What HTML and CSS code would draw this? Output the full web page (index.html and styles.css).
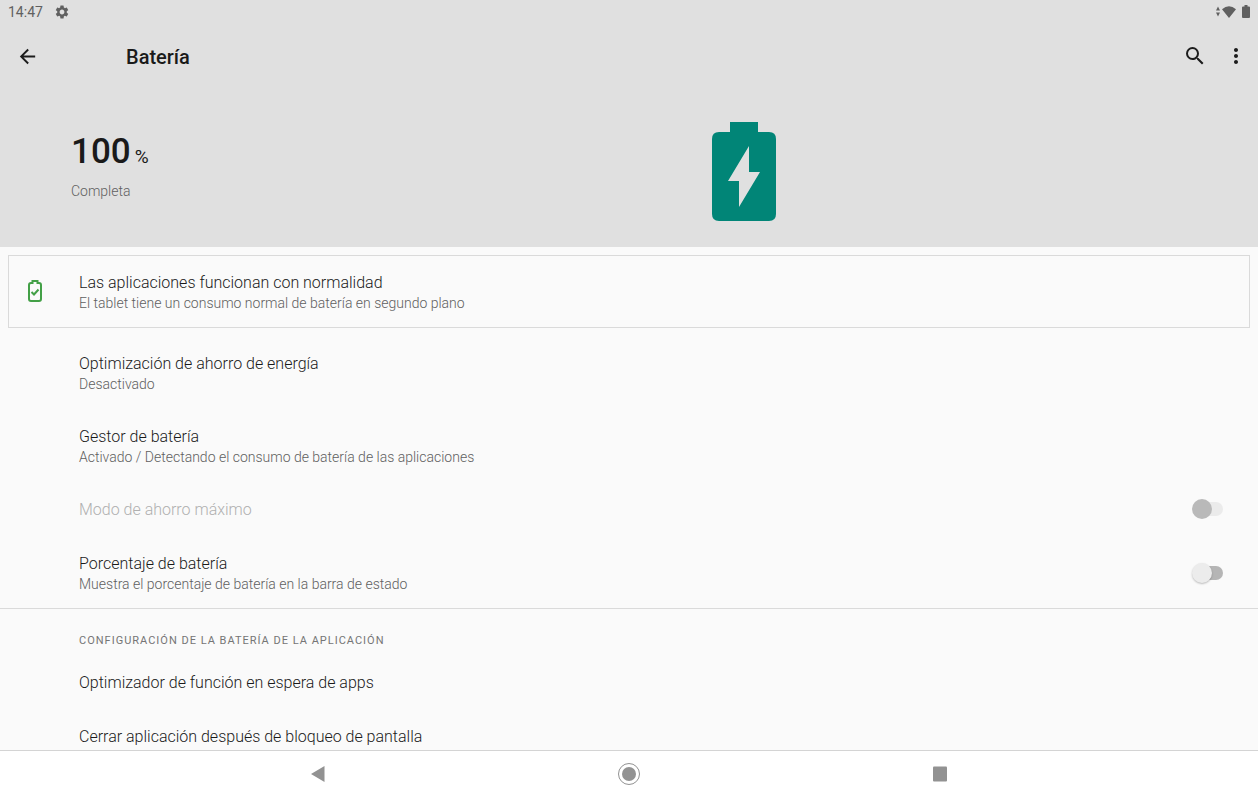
FILE: index.html
```html
<!DOCTYPE html>
<html lang="es">
<head>
  <meta charset="UTF-8">
  <title>Batería</title>
  <meta name="viewport" content="width=device-width, initial-scale=1.0">
  <link rel="stylesheet" href="styles.css">
</head>
<body>
  <header class="header">
    <div class="status-bar">
      <span class="clock">14:47</span>
      <svg class="status-gear" viewBox="0 0 24 24" width="16" height="16"><path d="M19.14 12.94c.04-.3.06-.61.06-.94 0-.32-.02-.64-.07-.94l2.03-1.58a.49.49 0 0 0 .12-.61l-1.92-3.32a.488.488 0 0 0-.59-.22l-2.39.96c-.5-.38-1.03-.7-1.62-.94l-.36-2.54a.484.484 0 0 0-.48-.41h-3.84c-.24 0-.43.17-.47.41l-.36 2.54c-.59.24-1.13.57-1.62.94l-2.39-.96c-.22-.08-.47 0-.59.22L2.74 8.87c-.12.21-.08.47.12.61l2.03 1.58c-.05.3-.09.63-.09.94s.02.64.07.94l-2.03 1.58a.49.49 0 0 0-.12.61l1.92 3.32c.12.22.37.29.59.22l2.39-.96c.5.38 1.03.7 1.62.94l.36 2.54c.05.24.24.41.48.41h3.84c.24 0 .44-.17.47-.41l.36-2.54c.59-.24 1.13-.56 1.62-.94l2.39.96c.22.08.47 0 .59-.22l1.92-3.32c.12-.22.07-.47-.12-.61l-2.01-1.58zM12 15.6c-1.98 0-3.6-1.62-3.6-3.6s1.62-3.6 3.6-3.6 3.6 1.62 3.6 3.6-1.62 3.6-3.6 3.6z"/></svg>
      <div class="status-icons">
        <svg viewBox="0 0 20 14" width="20" height="14"><path d="M0 5.500l2-4 2 4zM0 7.500h4l-2 4zM13 13L6 4.200Q13-1.600 20 4.200z"/></svg>
        <svg viewBox="0 0 8 14" width="8" height="14"><path d="M2.500 0h3v1.500H7q1 0 1 1V12q0 1-1 1H1q-1 0-1-1V2.500q0-1 1-1h1.500z"/></svg>
      </div>
    </div>

    <div class="toolbar">
      <button type="button" class="icon-btn" aria-label="Atrás">
        <svg viewBox="0 0 24 24" width="23" height="23"><path d="M20 11H7.830l5.590-5.590L12 4l-8 8 8 8 1.410-1.410L7.830 13H20v-2z"/></svg>
      </button>
      <h1>Batería</h1>
      <button type="button" class="icon-btn" aria-label="Buscar">
        <svg viewBox="0 0 24 24" width="24" height="24"><path d="M15.500 14h-.79l-.28-.27A6.471 6.471 0 0 0 16 9.500 6.500 6.500 0 1 0 9.500 16c1.610 0 3.090-.59 4.230-1.570l.27.28v.79l5 4.990L20.490 19l-4.990-5zm-6 0C7.010 14 5 11.990 5 9.500S7.010 5 9.500 5 14 7.010 14 9.500 11.990 14 9.500 14z"/></svg>
      </button>
      <button type="button" class="icon-btn" aria-label="Más opciones">
        <svg viewBox="0 0 24 24" width="24" height="24"><path d="M12 8c1.100 0 2-.9 2-2s-.9-2-2-2-2 .9-2 2 .9 2 2 2zm0 2c-1.100 0-2 .9-2 2s.9 2 2 2 2-.9 2-2-.9-2-2-2zm0 6c-1.100 0-2 .9-2 2s.9 2 2 2 2-.9 2-2-.9-2-2-2z"/></svg>
      </button>
    </div>

    <div class="summary">
      <div class="level">
        <p class="percent"><span>100</span><small>%</small></p>
        <p class="state">Completa</p>
      </div>
      <svg class="battery" viewBox="0 0 64 99" width="64" height="99">
        <path fill="#018577" d="M18 0h28v10h11q7 0 7 7v75q0 7-7 7H7q-7 0-7-7V17q0-7 7-7h11z"/>
        <path fill="#e0e0e0" d="M37 24v26h11L27 85V59H16z"/>
      </svg>
    </div>
  </header>

  <main class="list">
    <a href="#" class="card">
      <svg class="card-icon" viewBox="0 0 14 22" width="14" height="22"><path d="M4.500 3V1h5v2H11q2 0 2 2v14q0 2-2 2H3q-2 0-2-2V5q0-2 2-2zM3.500 12l2.500 2.500 4.500-5"/></svg>
      <span class="text">
        <span class="title">Las aplicaciones funcionan con normalidad</span>
        <span class="sub">El tablet tiene un consumo normal de batería en segundo plano</span>
      </span>
    </a>

    <a href="#" class="row">
      <span class="text">
        <span class="title">Optimización de ahorro de energía</span>
        <span class="sub">Desactivado</span>
      </span>
    </a>
    <a href="#" class="row">
      <span class="text">
        <span class="title">Gestor de batería</span>
        <span class="sub">Activado / Detectando el consumo de batería de las aplicaciones</span>
      </span>
    </a>
    <label class="row disabled">
      <span class="text">
        <span class="title">Modo de ahorro máximo</span>
      </span>
      <input type="checkbox" class="switch" disabled>
    </label>
    <label class="row last">
      <span class="text">
        <span class="title">Porcentaje de batería</span>
        <span class="sub">Muestra el porcentaje de batería en la barra de estado</span>
      </span>
      <input type="checkbox" class="switch">
    </label>

    <section class="group">
      <h2>Configuración de la batería de la aplicación</h2>
      <a href="#" class="row"><span class="title">Optimizador de función en espera de apps</span></a>
      <a href="#" class="row"><span class="title">Cerrar aplicación después de bloqueo de pantalla</span></a>
    </section>
  </main>

  <nav class="nav-bar">
    <button type="button" aria-label="Atrás">
      <svg viewBox="0 0 24 24" width="24" height="24"><path d="M5 12L18.500 4v16z"/></svg>
    </button>
    <button type="button" aria-label="Inicio">
      <svg viewBox="0 0 24 24" width="24" height="24"><circle cx="12" cy="12" r="7"/><circle class="ring" cx="12" cy="12" r="10.500"/></svg>
    </button>
    <button type="button" aria-label="Recientes">
      <svg viewBox="0 0 24 24" width="24" height="24"><rect x="5" y="4.500" width="14" height="15" rx="1"/></svg>
    </button>
  </nav>
</body>
</html>
```
FILE: styles.css
```css
* {
  box-sizing: border-box;
}

body {
  margin: 0;
  height: 100vh;
  display: flex;
  flex-direction: column;
  overflow: hidden;
  font-family: Roboto, sans-serif;
  background-color: #fafafa;
  color: #1a1a1a;
}

h1, h2, p {
  margin: 0;
}

a {
  color: inherit;
  text-decoration: none;
}

button {
  padding: 0;
  border: 0;
  background: none;
  display: flex;
  align-items: center;
  justify-content: center;
}

svg {
  display: block;
}

.header {
  flex: none;
  background-color: #e0e0e0;
}

.status-bar {
  display: flex;
  align-items: center;
  height: 24px;
  padding: 0 8px;
  color: #606060;
  fill: #606060;
}

.clock {
  font-size: 14px;
}

.status-gear {
  margin-left: 11px;
}

.status-icons {
  display: flex;
  gap: 6px;
  margin-left: auto;
}

.toolbar {
  display: flex;
  align-items: center;
  height: 64px;
  padding: 0 2px 0 7px;
}

.toolbar h1 {
  flex: 1;
  margin-left: 78px;
  padding-top: 2px;
  font-size: 20px;
  font-weight: 500;
}

.icon-btn {
  width: 41px;
  height: 40px;
  fill: #1c1c1c;
}

.summary {
  display: grid;
  grid-template-columns: 1fr 1fr;
  column-gap: 10px;
  align-items: start;
  height: 159px;
  padding: 34px 0 0 71px;
}

.battery {
  margin-left: 42px;
}

.level {
  padding-top: 8px;
}

.percent {
  display: flex;
  align-items: baseline;
  gap: 4px;
  height: 44px;
  font-size: 35px;
  font-weight: 500;
  line-height: 44px;
}

.percent small {
  font-size: 19px;
  font-weight: 400;
}

.state {
  margin-top: 8px;
  font-size: 14px;
  font-weight: 300;
  line-height: 19px;
  color: #606060;
}

.list {
  flex: 1;
  min-height: 0;
  overflow: hidden;
}

.card {
  display: flex;
  align-items: center;
  margin: 8px 8px 9px;
  padding: 16px 19px 14px;
  border: 1px solid #dadada;
}

.card-icon {
  margin-right: 37px;
  margin-bottom: 4px;
  fill: none;
  stroke: #43a047;
  stroke-width: 2;
}

.row {
  display: flex;
  align-items: center;
  padding: 16px 35px 16px 79px;
}

.row.last {
  padding-bottom: 14px;
}

.text {
  flex: 1;
}

.title, .sub {
  display: block;
  font-weight: 300;
}

.title {
  font-size: 16px;
  line-height: 22px;
}

.sub {
  font-size: 14px;
  line-height: 19px;
  color: #606060;
}

.disabled .title {
  color: #b0b0b0;
}

.switch {
  appearance: none;
  position: relative;
  width: 30px;
  height: 14px;
  margin: 0 0 2px;
  border-radius: 7px;
  background-color: #b5b5b5;
}

.switch::before {
  content: "";
  position: absolute;
  left: -1px;
  top: -3px;
  width: 20px;
  height: 20px;
  border-radius: 50%;
  background-color: #ececec;
  box-shadow: 0 1px 2px rgba(0, 0, 0, 0.25);
}

.switch:disabled {
  background-color: #ebebeb;
}

.switch:disabled::before {
  background-color: #b9b9b9;
  box-shadow: none;
}

.group {
  border-top: 1px solid #dadada;
}

.group h2 {
  padding: 24px 79px 7px;
  font-size: 11px;
  font-weight: 400;
  line-height: 16px;
  letter-spacing: 1px;
  text-transform: uppercase;
  color: #757575;
}

.nav-bar {
  flex: none;
  display: flex;
  height: 48px;
  padding: 0 162px 2px;
  border-top: 1px solid #d4d4d4;
  background-color: #fff;
}

.nav-bar button {
  flex: 1;
  fill: #929292;
}

.nav-bar .ring {
  fill: none;
  stroke: #929292;
}
```
